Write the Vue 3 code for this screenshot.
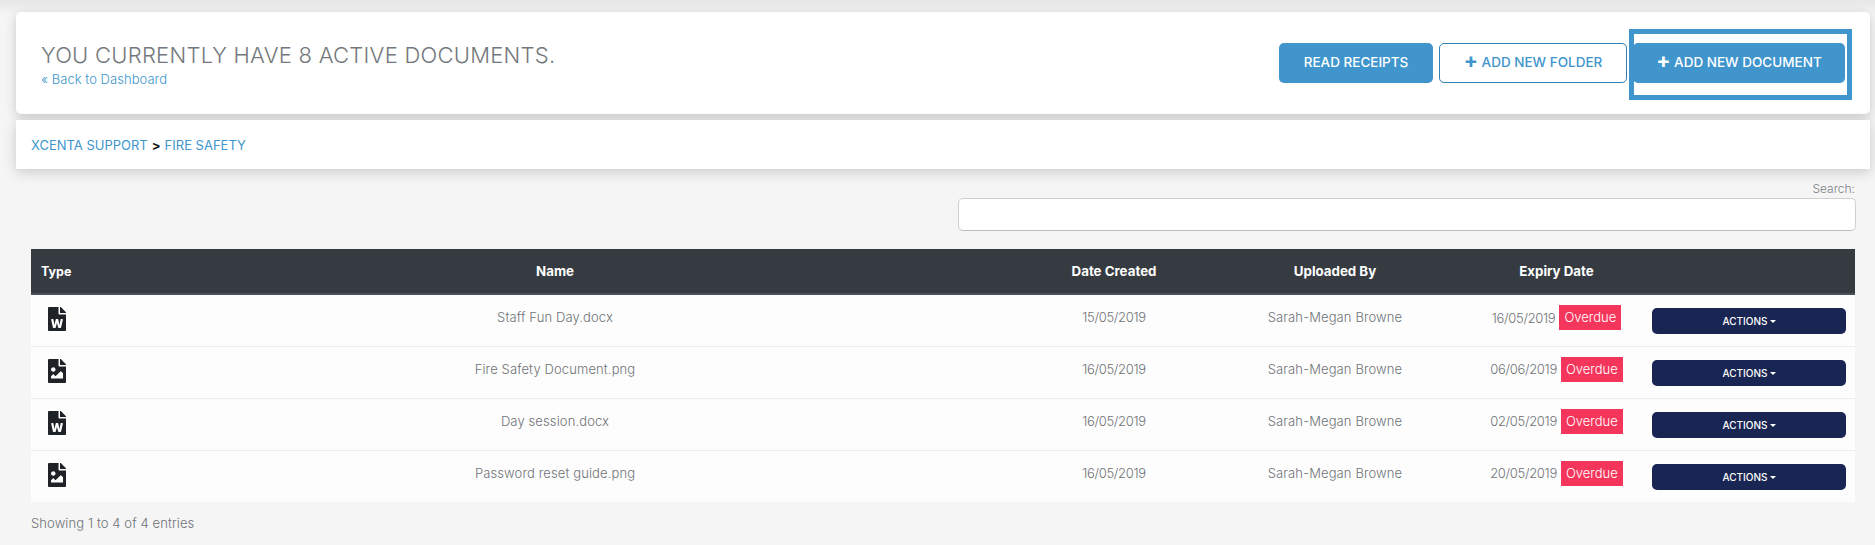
<script setup>
const rows = [
  { kind: 'word', name: 'Staff Fun Day.docx', created: '15/05/2019', expiry: '16/05/2019' },
  { kind: 'image', name: 'Fire Safety Document.png', created: '16/05/2019', expiry: '06/06/2019' },
  { kind: 'word', name: 'Day session.docx', created: '16/05/2019', expiry: '02/05/2019' },
  { kind: 'image', name: 'Password reset guide.png', created: '16/05/2019', expiry: '20/05/2019' }
]
const icons = {
  word: 'M224 136V0H24C10.700 0 0 10.700 0 24v464c0 13.300 10.700 24 24 24h336c13.300 0 24-10.700 24-24V160H248c-13.200 0-24-10.800-24-24zm57.100 120H305c7.700 0 13.400 7.100 11.700 14.700l-38 168c-1.200 5.500-6.100 9.300-11.700 9.300h-38c-5.500 0-10.300-3.800-11.600-9.100-25.800-103.500-20.800-81.200-25.600-110.500h-.5c-1.100 14.300-2.400 17.400-25.600 110.500-1.300 5.300-6.100 9.100-11.600 9.100H117c-5.600 0-10.500-3.900-11.700-9.400l-37.800-168c-1.700-7.500 4-14.600 11.700-14.600h24.500c5.700 0 10.700 4 11.800 9.700 15.600 78 20.100 109.500 21 122.200 1.600-10.200 7.300-32.700 29.400-122.700 1.300-5.400 6.100-9.100 11.700-9.100h29.100c5.600 0 10.400 3.800 11.700 9.200 24 100.400 28.800 124 29.600 129.400-.2-11.200-2.600-17.800 21.600-129.200 1-5.600 5.900-9.500 11.500-9.500zM384 121.900v6.100H256V0h6.100c6.400 0 12.500 2.500 17 7l97.900 98c4.500 4.500 7 10.600 7 16.900z',
  image: 'M384 121.941V128H256V0h6.059a24 24 0 0 1 16.970 7.029l97.941 97.941a24.002 24.002 0 0 1 7.030 16.971zM248 160c-13.200 0-24-10.800-24-24V0H24C10.745 0 0 10.745 0 24v464c0 13.255 10.745 24 24 24h336c13.255 0 24-10.745 24-24V160H248zm-135.455 16c26.510 0 48 21.490 48 48s-21.490 48-48 48-48-21.490-48-48 21.491-48 48-48zm208 240h-256l.485-48.485L104.545 328c4.686-4.686 11.799-4.201 16.485.485L160.545 368 264.060 264.485c4.686-4.686 12.284-4.686 16.970 0L320.545 304v112z'
}
</script>

<template>
  <div class="page">
    <header class="card head">
      <div class="title-block">
        <h1>YOU CURRENTLY HAVE 8 ACTIVE DOCUMENTS.</h1>
        <a class="back">« Back to Dashboard</a>
      </div>
      <div class="buttons">
        <button class="btn solid read">READ RECEIPTS</button>
        <button class="btn outline"><b class="plus">+</b> ADD NEW FOLDER</button>
        <span class="focus"><button class="btn solid doc"><b class="plus">+</b> ADD NEW DOCUMENT</button></span>
      </div>
    </header>
    <nav class="card crumbs"><a>XCENTA SUPPORT</a> <b>&gt;</b> <a>FIRE SAFETY</a></nav>

    <div class="search">
      <label>Search:</label>
      <input type="text" />
    </div>

    <table>
      <thead>
        <tr>
          <th class="c-type">Type</th>
          <th class="c-name">Name</th>
          <th class="c-date">Date Created</th>
          <th class="c-user">Uploaded By</th>
          <th class="c-exp">Expiry Date</th>
          <th class="c-act"></th>
        </tr>
      </thead>
      <tbody>
        <tr v-for="r in rows" :key="r.name">
          <td class="icon-cell">
            <svg width="18" height="24" viewBox="0 0 384 512">
              <path fill="#1f2328" :d="icons[r.kind]" />
            </svg>
          </td>
          <td>{{ r.name }}</td>
          <td class="date">{{ r.created }}</td>
          <td>Sarah-Megan Browne</td>
          <td class="exp-cell">
            <div class="exp"><span class="date">{{ r.expiry }}</span><span class="badge">Overdue</span></div>
          </td>
          <td class="act-cell"><button class="actions">ACTIONS<i class="caret"></i></button></td>
        </tr>
      </tbody>
    </table>
    <p class="info">Showing 1 to 4 of 4 entries</p>
  </div>
</template>

<style>
html, body { margin: 0; background: #f5f5f5; }
</style>

<style scoped>
.page {
  height: 545px;
  overflow: hidden;
  box-sizing: border-box;
  padding: 12px 5px 0 16px;
  font-family: Inter, "Open Sans", sans-serif;
  color: #6f7479;
  background: linear-gradient(#e6e6e6, #f5f5f5 14px);
}
.card {
  background: #fff;
  box-shadow: 0 3px 12px rgba(0, 0, 0, 0.18);
}
.head {
  height: 102px;
  border-radius: 5px;
  display: flex;
  justify-content: space-between;
  align-items: flex-start;
  box-sizing: border-box;
  padding: 28px 18px 0 25px;
}
h1 {
  margin: 2px 0 0;
  font-size: 22px;
  font-weight: 300;
  line-height: 26px;
  letter-spacing: 0.25px;
  color: #74787c;
}
.back {
  display: block;
  font-size: 13px;
  font-weight: 300;
  line-height: 20px;
  margin-top: 1px;
  letter-spacing: 0.05px;
  color: #4095cd;
}
.buttons { display: flex; gap: 6px; align-items: flex-start; }
.btn {
  display: block;
  height: 40px;
  margin-top: 3px;
  border-radius: 5px;
  font: 500 13.500px Inter, sans-serif;
  box-sizing: border-box;
  padding: 0 0 2px;
}
.solid { background: #4095cd; color: #fff; border: 0; }
.read { width: 154px; }
.outline { background: #fff; color: #4095cd; border: 1px solid #2f80b5; width: 188px; }
.plus { font-size: 21px; font-weight: 700; line-height: 0; vertical-align: -1px; }
.focus {
  display: block;
  width: 223px;
  height: 71px;
  box-sizing: border-box;
  border: 5px solid #4095cd;
  margin: -11px 0 0 -4px;
  padding: 9px 0 0;
}
.doc { width: 212px; margin: 0 0 0 -1px; }
.crumbs {
  margin-top: 6px;
  height: 49px;
  box-sizing: border-box;
  padding: 0 15px;
  display: flex;
  align-items: center;
  gap: 4px;
  font-size: 13px;
  color: #111;
}
.crumbs a { color: #4095cd; }
.search {
  display: flex;
  flex-direction: column;
  align-items: flex-end;
  width: 898px;
  margin: 12px 0 0 942px;
}
.search label { font-size: 12px; font-weight: 300; line-height: 16px; color: #7d8185; margin-right: 1px; }
.search input {
  width: 100%;
  height: 33px;
  margin-top: 1px;
  box-sizing: border-box;
  background: #fff;
  border: 1px solid #cfcfcf;
  border-bottom-color: #bdbdbd;
  border-radius: 5px;
}
table {
  width: 1824px;
  margin: 18px 0 0 15px;
  border-collapse: collapse;
  table-layout: fixed;
  background: #fdfdfd;
  font-size: 13px;
}
th {
  height: 44px;
  padding: 0;
  background: #363a41;
  color: #fff;
  font-size: 13.300px;
  font-weight: 700;
  border-bottom: 2px solid #4a5058;
}
.c-type { width: 50px; text-align: left; padding-left: 10px; box-sizing: border-box; font-size: 12.500px; }
.c-name { width: 948px; }
.c-date { width: 170px; }
.c-user { width: 272px; }
.c-exp { width: 171px; }
td {
  height: 52px;
  box-sizing: border-box;
  padding: 12px 0 0;
  vertical-align: top;
  text-align: center;
  line-height: 20px;
  font-weight: 300;
  letter-spacing: 0.12px;
  border-bottom: 1px solid #ececf0;
  color: #6f7377;
}
tbody tr:last-child td { border-bottom: 0; }
.date { letter-spacing: -0.3px; }
.icon-cell { text-align: left; padding: 12px 0 0 17px; }
.icon-cell svg { display: block; }
.exp-cell { padding-top: 10px; }
.exp {
  display: flex;
  justify-content: center;
  align-items: center;
  gap: 4px;
  white-space: nowrap;
}
.badge {
  background: #f5365c;
  color: #fff;
  padding: 0 5px;
  line-height: 25px;
  font-size: 13px;
  letter-spacing: 0;
}
.act-cell { padding: 13px 9px 0 10px; }
.actions {
  display: block;
  width: 100%;
  height: 26px;
  padding: 0;
  background: #192553;
  color: #fff;
  border: 0;
  border-radius: 5px;
  font: 500 10px Inter, sans-serif;
}
.caret {
  display: inline-block;
  margin-left: 2px;
  vertical-align: 2px;
  border-left: 3px solid transparent;
  border-right: 3px solid transparent;
  border-top: 3px solid #fff;
}
.info {
  margin: 11px 0 0 15px;
  font-size: 13px;
  font-weight: 300;
  line-height: 20px;
  letter-spacing: 0.1px;
  color: #6f7377;
}
</style>
